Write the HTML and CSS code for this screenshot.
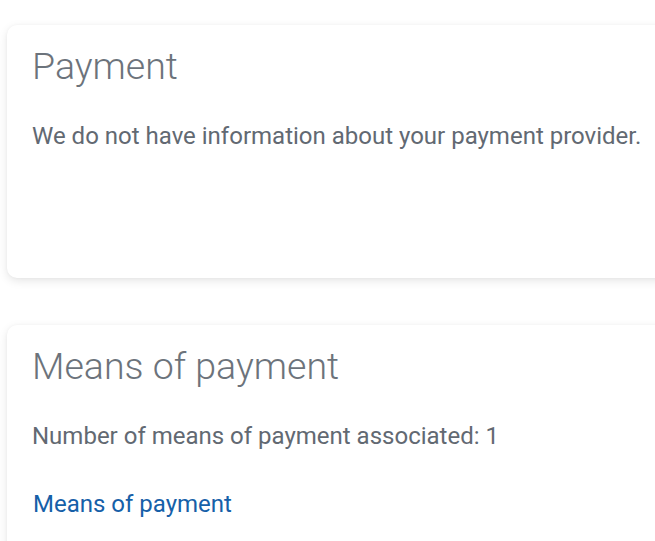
FILE: index.html
```html
<!DOCTYPE html>
<html>
<head>
<meta charset="utf-8">
<link rel="stylesheet" href="styles.css">
</head>
<body>
<div class="page">
  <section class="card card-first">
    <h2 class="title">Payment</h2>
    <p class="text">We do not have information about your payment provider.</p>
  </section>
  <section class="card card-second">
    <h2 class="title">Means of payment</h2>
    <p class="text">Number of means of payment associated: 1</p>
    <a class="link" href="#">Means of payment</a>
  </section>
</div>
</body>
</html>
```
FILE: styles.css
```css
html, body {
  margin: 0;
  padding: 0;
  background: #ffffff;
  font-family: Roboto, "Liberation Sans", sans-serif;
  overflow: hidden;
}
.page {
  width: 700px;
  padding: 25px 0 0 7px;
  display: flex;
  flex-direction: column;
  gap: 47px;
}
.card {
  background: #fff;
  border-radius: 10px;
  box-shadow: 0 3px 10px rgba(0,0,0,0.10), 0 0 3px rgba(0,0,0,0.04);
  padding: 20px 25px 0 25px;
  box-sizing: border-box;
}
.card-first { height: 253px; }
.card-second { height: 260px; }
.title {
  margin: 0;
  font-weight: 300;
  font-size: 37.5px;
  line-height: 42px;
  color: #6c737b;
}
.text {
  margin: 35px 0 0 0;
  font-size: 24px;
  line-height: 28px;
  color: #626972;
}
.link {
  display: block;
  margin-top: 40px;
  margin-left: 1px;
  font-size: 24px;
  line-height: 28px;
  color: #1660a8;
  text-decoration: none;
}
```
